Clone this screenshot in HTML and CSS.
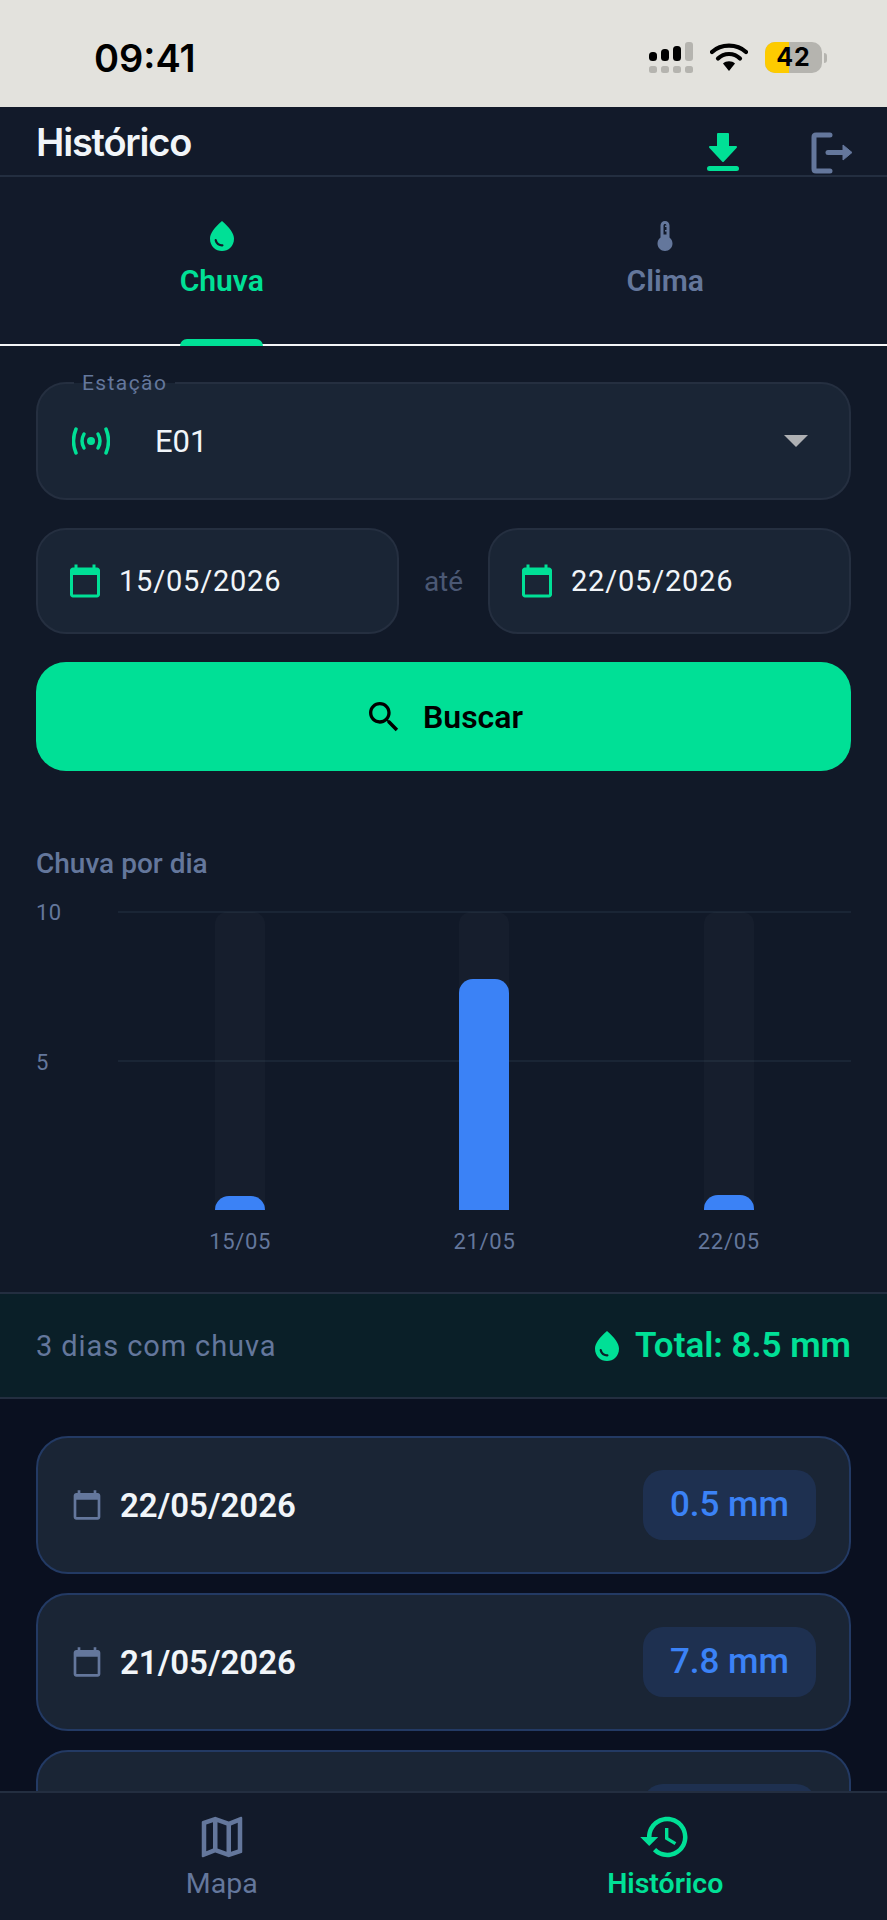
FILE: index.html
```html
<!DOCTYPE html>
<html lang="pt-BR">
<head>
    <meta charset="UTF-8">
    <meta name="viewport" content="width=device-width, initial-scale=1.0">
    <title>Histórico</title>
    <link rel="stylesheet" href="styles.css">
</head>
<body>
    <div class="status-bar">
        <span class="status-time">09:41</span>
        <div class="status-icons">
            <svg class="signal" width="44" height="31" viewBox="0 0 44 31">
                <rect x="0" y="10" width="8" height="9" rx="3.500" fill="#000"/>
                <rect x="12" y="7" width="8" height="12" rx="3.500" fill="#000"/>
                <rect x="24" y="4" width="8" height="15" rx="3.500" fill="#000"/>
                <rect x="36" y="0" width="8" height="19" rx="3" fill="#b5b4af"/>
                <rect x="0" y="24" width="8" height="7" rx="2.500" fill="#b5b4af"/>
                <rect x="12" y="24" width="8" height="7" rx="2.500" fill="#b5b4af"/>
                <rect x="24" y="24" width="8" height="7" rx="2.500" fill="#b5b4af"/>
                <rect x="36" y="24" width="8" height="7" rx="2.500" fill="#b5b4af"/>
            </svg>
            <svg class="wifi" width="38" height="29" viewBox="0 0 38 29">
                <path d="M2 9 C11 0.500 27 0.500 36 9" fill="none" stroke="#000" stroke-width="4.200" stroke-linecap="round"/>
                <path d="M8 15.500 C14 9.500 24 9.500 30 15.500" fill="none" stroke="#000" stroke-width="4.200" stroke-linecap="round"/>
                <path d="M13 20.500 C16 17.500 22 17.500 25 20.500 L19 28 Z" fill="#000"/>
            </svg>
            <div class="battery">
                <div class="battery-body"><span class="battery-fill"></span><span class="battery-num">42</span></div>
                <span class="battery-tip"></span>
            </div>
        </div>
    </div>

    <header class="app-header">
        <h1 class="app-title">Histórico</h1>
        <div class="header-actions">
            <svg width="34" height="40" viewBox="0 0 34 40">
                <path d="M12 2 H22 V15 H30 L17 29 L4 15 H12 Z" fill="#00e096" stroke="#00e096" stroke-width="2" stroke-linejoin="round"/>
                <rect x="1" y="34" width="32" height="5" rx="2.500" fill="#00e096"/>
            </svg>
            <svg width="42" height="42" viewBox="0 0 42 42">
                <path d="M19 3 H5 Q3 3 3 5 V37 Q3 39 5 39 H19" fill="none" stroke="#64779c" stroke-width="5" stroke-linecap="round" stroke-linejoin="round"/>
                <path d="M17 20.500 H32" fill="none" stroke="#64779c" stroke-width="5" stroke-linecap="round"/>
                <path d="M32 13 L41 20.500 L32 28 Z" fill="#64779c" stroke="#64779c" stroke-width="1" stroke-linejoin="round"/>
            </svg>
        </div>
    </header>

    <nav class="tabs">
        <div class="tab tab-active">
            <svg class="tab-icon" viewBox="0 0 24 24"><path d="M12 2c-5.330 4.550-8 8.480-8 11.800 0 4.980 3.800 8.200 8 8.200s8-3.220 8-8.200c0-3.320-2.670-7.250-8-11.800zM7.830 14c.37 0 .67.26.74.62.41 2.220 2.280 2.980 3.640 2.870.43-.02.79.32.79.75 0 .4-.32.73-.72.75-2.130.13-4.620-1.090-5.190-4.120-.08-.45.28-.87.74-.87z"/></svg>
            <span class="tab-label">Chuva</span>
            <span class="tab-marker"></span>
        </div>
        <div class="tab">
            <svg class="tab-icon" viewBox="0 0 24 24"><path d="M15 13V5c0-1.660-1.340-3-3-3S9 3.340 9 5v8c-1.210.91-2 2.370-2 4 0 2.760 2.240 5 5 5s5-2.240 5-5c0-1.630-.79-3.090-2-4zm-4-8c0-.55.45-1 1-1s1 .45 1 1h-1v1h1v2h-1v1h1v2h-2V5z"/></svg>
            <span class="tab-label">Clima</span>
        </div>
    </nav>

    <section class="filters">
        <div class="field station-field">
            <span class="field-legend">Estação</span>
            <svg width="38" height="28" viewBox="0 0 38 28">
                <circle cx="19" cy="14" r="4" fill="#00e096"/>
                <path d="M12 7 Q8 14 12 21 M26 7 Q30 14 26 21" fill="none" stroke="#00e096" stroke-width="3.500" stroke-linecap="round"/>
                <path d="M4 2 Q-1 14 4 26 M34 2 Q39 14 34 26" fill="none" stroke="#00e096" stroke-width="3.500" stroke-linecap="round"/>
            </svg>
            <span class="station-name">E01</span>
            <span class="caret"></span>
        </div>
        <div class="date-row">
            <div class="field date-field">
                <svg class="date-icon" viewBox="0 0 24 24"><path d="M20 3h-1V1h-2v2H7V1H5v2H4c-1.100 0-2 .9-2 2v16c0 1.100.9 2 2 2h16c1.100 0 2-.9 2-2V5c0-1.100-.9-2-2-2zm0 18H4V8h16v13z"/></svg>
                <span class="date-text">15/05/2026</span>
            </div>
            <span class="date-sep">até</span>
            <div class="field date-field">
                <svg class="date-icon" viewBox="0 0 24 24"><path d="M20 3h-1V1h-2v2H7V1H5v2H4c-1.100 0-2 .9-2 2v16c0 1.100.9 2 2 2h16c1.100 0 2-.9 2-2V5c0-1.100-.9-2-2-2zm0 18H4V8h16v13z"/></svg>
                <span class="date-text">22/05/2026</span>
            </div>
        </div>
        <button class="search-btn">
            <svg width="40" height="40" viewBox="0 0 24 24"><path d="M15.500 14h-.79l-.28-.27C15.410 12.590 16 11.110 16 9.500 16 5.910 13.090 3 9.500 3S3 5.910 3 9.500 5.910 16 9.500 16c1.610 0 3.090-.59 4.230-1.570l.27.28v.79l5 4.990L20.490 19l-4.990-5zm-6 0C7.010 14 5 11.990 5 9.500S7.010 5 9.500 5 14 7.010 14 9.500 11.990 14 9.500 14z"/></svg>
            Buscar
        </button>
    </section>

    <section class="chart">
        <h2 class="chart-title">Chuva por dia</h2>
        <div class="chart-body">
            <span class="axis-num axis-top">10</span>
            <span class="axis-num axis-mid">5</span>
            <span class="grid-line grid-top"></span>
            <span class="grid-line grid-mid"></span>
            <div class="bars">
                <div class="bar-col">
                    <div class="bar-track"><div class="bar-fill" style="height: 14px"></div></div>
                    <span class="bar-date">15/05</span>
                </div>
                <div class="bar-col">
                    <div class="bar-track"><div class="bar-fill" style="height: 231px"></div></div>
                    <span class="bar-date">21/05</span>
                </div>
                <div class="bar-col">
                    <div class="bar-track"><div class="bar-fill" style="height: 15px"></div></div>
                    <span class="bar-date">22/05</span>
                </div>
            </div>
        </div>
    </section>

    <section class="summary">
        <span class="summary-days">3 dias com chuva</span>
        <span class="summary-total">
            <svg width="36" height="36" viewBox="0 0 24 24"><path d="M12 2c-5.330 4.550-8 8.480-8 11.800 0 4.980 3.800 8.200 8 8.200s8-3.220 8-8.200c0-3.320-2.670-7.250-8-11.800zM7.830 14c.37 0 .67.26.74.62.41 2.220 2.280 2.980 3.640 2.870.43-.02.79.32.79.75 0 .4-.32.73-.72.75-2.130.13-4.620-1.090-5.190-4.120-.08-.45.28-.87.74-.87z"/></svg>
            Total: 8.5 mm
        </span>
    </section>

    <main class="day-list">
        <div class="day-card">
            <svg class="day-icon" viewBox="0 0 24 24"><path d="M20 3h-1V1h-2v2H7V1H5v2H4c-1.100 0-2 .9-2 2v16c0 1.100.9 2 2 2h16c1.100 0 2-.9 2-2V5c0-1.100-.9-2-2-2zm0 18H4V8h16v13z"/></svg>
            <span class="day-date">22/05/2026</span>
            <span class="day-badge">0.5 mm</span>
        </div>
        <div class="day-card">
            <svg class="day-icon" viewBox="0 0 24 24"><path d="M20 3h-1V1h-2v2H7V1H5v2H4c-1.100 0-2 .9-2 2v16c0 1.100.9 2 2 2h16c1.100 0 2-.9 2-2V5c0-1.100-.9-2-2-2zm0 18H4V8h16v13z"/></svg>
            <span class="day-date">21/05/2026</span>
            <span class="day-badge">7.8 mm</span>
        </div>
        <!-- third row is scrolled behind the nav, its contents don't show -->
        <div class="day-card">
            <span class="day-date"></span>
            <span class="day-badge"></span>
        </div>
    </main>

    <footer class="bottom-nav">
        <div class="nav-item">
            <svg class="nav-icon" viewBox="0 0 24 24"><path d="M20.500 3l-.16.03L15 5.100 9 3 3.360 4.900c-.21.07-.36.25-.36.48V20.500c0 .28.22.5.5.5l.16-.03L9 18.900l6 2.100 5.640-1.900c.21-.07.36-.25.36-.48V3.500c0-.28-.22-.5-.5-.5zM10 5.470l4 1.400v11.660l-4-1.400V5.470zm-5 .99l3-1.010v11.700l-3 1.160V6.460zm14 11.080l-3 1.010V6.860l3-1.160v11.840z"/></svg>
            <span class="nav-label">Mapa</span>
        </div>
        <div class="nav-item nav-active">
            <svg class="nav-icon" viewBox="0 0 24 24"><path d="M13 3c-4.970 0-9 4.030-9 9H1l3.890 3.890.07.14L9 12H6c0-3.870 3.130-7 7-7s7 3.130 7 7-3.130 7-7 7c-1.930 0-3.680-.79-4.940-2.060l-1.420 1.420C8.270 19.990 10.510 21 13 21c4.970 0 9-4.030 9-9s-4.030-9-9-9zm-1 5v5l4.280 2.540.72-1.210-3.500-2.080V8H12z"/></svg>
            <span class="nav-label">Histórico</span>
        </div>
    </footer>
</body>
</html>
```

FILE: styles.css
```css
* {
    box-sizing: border-box;
}

html, body {
    margin: 0;
    height: 1920px;
    overflow: hidden;
}

body {
    display: flex;
    flex-direction: column;
    background: #111928;
    color: #f1f5f9;
    font-family: Roboto, "Noto Sans", sans-serif;
}

/* status bar */
.status-bar {
    height: 107px;
    flex: none;
    background: #e3e2dd;
    display: flex;
    justify-content: space-between;
    align-items: center;
    padding: 8px 60px 0 94px;
    color: #000;
}

.status-time {
    font-family: Inter, sans-serif;
    font-size: 38px;
    font-weight: 600;
}

.status-icons {
    display: flex;
    align-items: center;
    gap: 17px;
}

.battery {
    display: flex;
    align-items: center;
    gap: 2px;
}

.battery-body {
    width: 57px;
    height: 31px;
    border-radius: 10px;
    background: #b5b4af;
    position: relative;
    overflow: hidden;
    text-align: center;
}

.battery-fill {
    position: absolute;
    left: 0;
    top: 0;
    bottom: 0;
    width: 24px;
    background: #fdcb00;
}

.battery-num {
    position: relative;
    font-family: Inter, sans-serif;
    font-size: 25px;
    font-weight: 700;
    line-height: 31px;
    letter-spacing: 1px;
}

.battery-tip {
    width: 3px;
    height: 10px;
    border-radius: 0 3px 3px 0;
    background: #b5b4af;
}

/* header */
.app-header {
    height: 70px;
    flex: none;
    background: #121a2a;
    border-bottom: 2px solid #232e40;
    display: flex;
    justify-content: space-between;
    padding: 0 34px 0 36px;
}

.app-title {
    margin: 12px 0 0;
    font-family: Inter, sans-serif;
    font-size: 38px;
    line-height: 46px;
    font-weight: 600;
    letter-spacing: -1.200px;
}

.header-actions {
    display: flex;
    gap: 71px;
    padding-top: 25px;
    align-items: flex-start;
}

/* tabs */
.tabs {
    height: 169px;
    flex: none;
    display: flex;
    background: #121a2a;
    border-bottom: 2px solid #f4f5f7;
}

.tab {
    flex: 1;
    display: flex;
    flex-direction: column;
    align-items: center;
    position: relative;
    padding-top: 41px;
    color: #64779c;
}

.tab-active {
    color: #00e096;
}

.tab-icon {
    width: 36px;
    height: 36px;
    fill: currentColor;
}

.tab-label {
    font-size: 30px;
    font-weight: 600;
    line-height: 36px;
    margin-top: 9px;
}

.tab-marker {
    position: absolute;
    bottom: -2px;
    width: 83px;
    height: 7px;
    border-radius: 7px 7px 0 0;
    background: #00e096;
}

/* filters */
.filters {
    flex: none;
    padding: 36px 36px 0;
    display: flex;
    flex-direction: column;
}

.field {
    background: #1a2535;
    border: 2px solid #252f40;
    border-radius: 30px;
    display: flex;
    align-items: center;
}

.station-field {
    height: 118px;
    padding: 0 41px 0 34px;
    position: relative;
    margin-bottom: 28px;
}

.field-legend {
    position: absolute;
    left: 36px;
    top: -13px;
    padding: 0 8px;
    background: linear-gradient(#111928 50%, #1a2535 50%);
    color: #64779c;
    font-size: 21px;
    line-height: 24px;
    letter-spacing: 1.400px;
}

.station-name {
    flex: 1;
    margin-left: 45px;
    font-size: 31px;
}

.caret {
    width: 0;
    height: 0;
    border-left: 12px solid transparent;
    border-right: 12px solid transparent;
    border-top: 12px solid #aeb0b3;
}

.date-row {
    display: flex;
    align-items: center;
    margin-bottom: 28px;
}

.date-field {
    flex: none;
    width: 363px;
    height: 106px;
    padding-left: 29px;
    gap: 16px;
}

.date-icon {
    width: 36px;
    height: 36px;
    fill: #00e096;
}

.date-text {
    font-size: 29px;
    letter-spacing: 0.8px;
}

.date-sep {
    flex: 1;
    text-align: center;
    color: #4b5874;
    font-size: 28px;
}

.search-btn {
    height: 109px;
    border: 0;
    border-radius: 30px;
    background: #00e096;
    color: #000;
    font-family: inherit;
    font-size: 32px;
    font-weight: 600;
    display: flex;
    align-items: center;
    justify-content: center;
    gap: 19px;
}

/* chart */
.chart {
    flex: none;
    height: 521px;
    padding: 76px 36px 0;
}

.chart-title {
    margin: 0;
    color: #64779c;
    font-size: 28px;
    line-height: 34px;
    font-weight: 500;
}

.chart-body {
    position: relative;
    margin-top: 31px;
    padding-left: 82px;
}

.axis-num {
    position: absolute;
    left: 0;
    color: #64779c;
    font-size: 22px;
    line-height: 26px;
    letter-spacing: 0.5px;
}

.axis-top {
    top: -12px;
}

.axis-mid {
    top: 138px;
}

.grid-line {
    position: absolute;
    left: 82px;
    right: 0;
    height: 2px;
    background: #1a2535;
}

.grid-top {
    top: -1px;
}

.grid-mid {
    top: 148px;
}

.bars {
    display: flex;
    position: relative;
}

.bar-col {
    flex: 1;
    display: flex;
    flex-direction: column;
    align-items: center;
}

.bar-track {
    width: 50px;
    height: 298px;
    border-radius: 12px 12px 0 0;
    background: rgba(255, 255, 255, 0.025);
    display: flex;
    align-items: flex-end;
}

.bar-fill {
    width: 100%;
    background: #3b82f6;
    border-radius: 14px 14px 0 0;
}

.bar-date {
    margin-top: 19px;
    color: #64779c;
    font-size: 22px;
    line-height: 26px;
    letter-spacing: 0.7px;
}

/* summary */
.summary {
    flex: none;
    height: 107px;
    padding: 0 36px;
    background: #0a1f28;
    border-top: 2px solid #232e40;
    border-bottom: 2px solid #232e40;
    display: flex;
    justify-content: space-between;
    align-items: center;
}

.summary-days {
    color: #64779c;
    font-size: 29px;
    letter-spacing: 0.9px;
}

.summary-total {
    color: #00e096;
    font-size: 35px;
    font-weight: 600;
    display: flex;
    align-items: center;
    gap: 10px;
}

.summary-total svg {
    fill: #00e096;
}

/* day list */
.day-list {
    flex: 1;
    min-height: 0;
    overflow: hidden;
    background: #0a1020;
    padding: 37px 36px 0;
    display: flex;
    flex-direction: column;
    gap: 19px;
}

.day-card {
    flex: none;
    height: 138px;
    background: #1a2535;
    border: 2px solid #233a64;
    border-radius: 32px;
    padding: 0 33px;
    display: flex;
    align-items: center;
}

.day-icon {
    width: 32px;
    height: 32px;
    fill: #64779c;
}

.day-date {
    flex: 1;
    margin-left: 17px;
    font-size: 33px;
    font-weight: 600;
}

.day-badge {
    width: 173px;
    height: 70px;
    border-radius: 20px;
    background: #1e3050;
    color: #3b82f6;
    font-size: 35px;
    font-weight: 500;
    line-height: 70px;
    text-align: center;
}

/* bottom nav */
.bottom-nav {
    flex: none;
    height: 129px;
    background: #121a2a;
    border-top: 2px solid #232e40;
    display: flex;
}

.nav-item {
    flex: 1;
    display: flex;
    flex-direction: column;
    align-items: center;
    color: #64779c;
    padding-top: 17px;
}

.nav-active {
    color: #00e096;
}

.nav-icon {
    width: 54px;
    height: 54px;
    fill: currentColor;
}

.nav-label {
    font-size: 28.5px;
    line-height: 34px;
    margin-top: 3px;
}

.nav-active .nav-label {
    font-weight: 600;
}
```
